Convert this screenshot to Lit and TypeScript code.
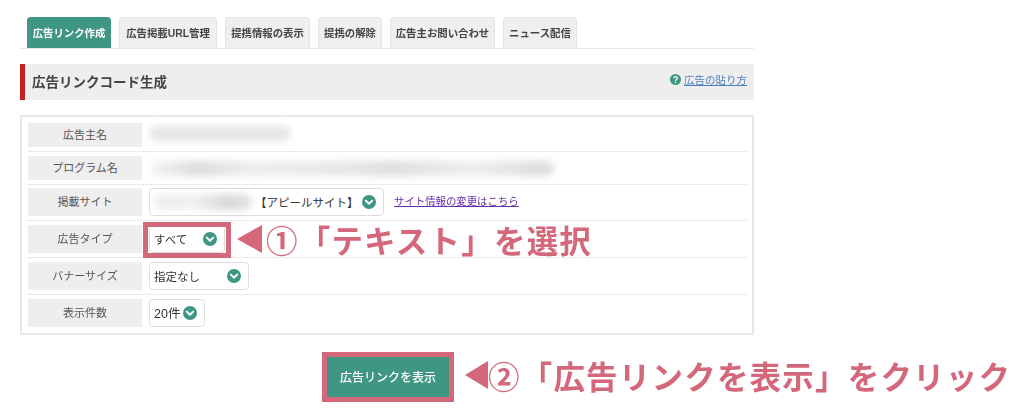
import { LitElement, html, css, svg } from "lit";
import { customElement } from "lit/decorators.js";

const chevron = svg`<svg class="chev" width="14" height="14" viewBox="0 0 14 14"><circle cx="7" cy="7" r="7" fill="#3f9683"/><path d="M3.8 5.6 7 8.7l3.2-3.1" fill="none" stroke="#fff" stroke-width="2" stroke-linecap="round" stroke-linejoin="round"/></svg>`;

@customElement("app-root")
export class AppRoot extends LitElement {
  static styles = css`
    :host { display: block; width: 1024px; height: 413px; position: relative; overflow: hidden; background: #fff;
      font-family: "Liberation Sans", "Noto Sans CJK JP", sans-serif; color: #444; }
    .page { padding: 17px 270px 0 20px; filter: blur(0.35px); }
    .tabs { display: flex; gap: 8px; padding-left: 7px; height: 32px; border-bottom: 1px solid #e6e6e6; box-sizing: border-box; }
    .tab { height: 31px; box-sizing: border-box; border: 1px solid #e3e3e3; border-bottom: 0; border-radius: 4px 4px 0 0; background: #efefef; padding-bottom: 1px;
      font-size: 10.4px; font-weight: 700; color: #444; display: flex; align-items: center; justify-content: center; white-space: nowrap; }
    .tab.on { background: #3f9683; border-color: #3f9683; color: #fff; }
    .heading { margin-top: 15px; height: 36px; box-sizing: border-box; background: #eee; border-left: 5px solid #c5221f; display: flex; align-items: center; justify-content: space-between; padding: 0 7px 2px 7px; }
    .heading h2 { margin: 0; font-size: 13.5px; font-weight: 700; color: #444; }
    .help { display: flex; align-items: center; gap: 3px; font-size: 10.5px; color: #4f7fc0; text-decoration: underline; margin-top: -4px; }
    .box { margin-top: 15px; border: 2px solid #e8e8e8; height: 220px; box-sizing: border-box; padding: 6px 4px 0 6px; }
    .row { display: flex; gap: 6px; border-bottom: 1px dotted #d8d8d8; padding-bottom: 4px; margin-bottom: 4px; position: relative; align-items: center; }
    .row:last-child { border-bottom: 0; margin-bottom: 0; }
    .row.snug { margin-bottom: 3px; }
    .label { width: 114px; flex: none; box-sizing: border-box; padding-bottom: 3px; background: #eee; display: flex; align-items: center; justify-content: center; font-size: 11px; color: #555; height: 24px; }
    .tall .label { height: 28px; }
    .select { height: 28px; box-sizing: border-box; border: 1px solid #ddd; border-radius: 4px; background: #fff; display: flex; align-items: center; font-size: 11.5px; color: #333; padding: 0 7px 1px 4px; margin-left: 1px; white-space: nowrap; }
    .select .txt { flex: 1; }
    .select .num { font-size: 12.5px; flex: 1; }
    .chev { flex: none; margin-top: 1px; }
    .blur { filter: blur(3.5px); background: #e6e6e6; border-radius: 8px; }
    .b1 { width: 142px; height: 15px; margin: 0 0 4px 1px; }
    .b2 { width: 404px; height: 15px; margin-left: 2px; background: linear-gradient(90deg, #f4f4f4, #dcdcdc 12%, #eee 25%, #e6e6e6 50%, #dedede 60%, #eee 80%, #ddd 96%); }
    .b3 { width: 98px; height: 16px; flex: none; background: linear-gradient(90deg, #eee, #f0f0f0 40%, #d8d8d8 75%, #e4e4e4); }
    .link { font-size: 10.4px; color: #6a2fb0; text-decoration: underline; margin-left: 4px; padding-bottom: 3px; }
    .r-out { position: absolute; left: 115px; top: -3px; width: 88px; height: 36px; box-sizing: border-box; border: 5px solid #d4677a; pointer-events: none; }
    .callout { position: absolute; display: flex; align-items: center; color: #d4677a; font-weight: 700; white-space: nowrap; font-size: 31.5px; letter-spacing: 1.2px; }
    .tri { flex: none; width: 0; height: 0; border-style: solid; border-color: transparent #d4677a transparent transparent; }
    .c1 { left: 209px; top: -5px; height: 38px; }
    .c1 .tri { border-width: 14px 25px 14px 0; margin-right: 4px; }
    .actions { padding: 17px 0 0 302px; position: relative; }
    .btn-wrap { position: relative; width: 132px; height: 50px; box-sizing: border-box; border: 5px solid #d4677a; display: flex; }
    .btn { flex: 1; background: #3f9683; color: #fff; font-size: 12px; font-weight: 500; display: flex; align-items: center; justify-content: center; padding-bottom: 2px; }
    .c2 { left: 445px; top: 15px; height: 50px; }
    .c2 .tri { border-width: 14px 23px 14px 0; }
  `;

  private tabs = [
    ["広告リンク作成", 84, true], ["広告掲載URL管理", 98, false], ["提携情報の表示", 85, false],
    ["提携の解除", 64, false], ["広告主お問い合わせ", 105, false], ["ニュース配信", 74, false],
  ] as const;

  render() {
    return html`
      <div class="page">
        <div class="tabs">
          ${this.tabs.map(([t, w, on]) => html`<div class="tab ${on ? "on" : ""}" style="width:${w}px">${t}</div>`)}
        </div>
        <div class="heading">
          <h2>広告リンクコード生成</h2>
          <span class="help">
            <svg width="11" height="11" viewBox="0 0 11 11"><circle cx="5.5" cy="5.5" r="5.5" fill="#3f9683"/><path d="M3.8 4.2a1.8 1.6 0 1 1 2.6 1.5c-.6.3-.9.6-.9 1.2" fill="none" stroke="#fff" stroke-width="1.3"/><circle cx="5.5" cy="8.5" r=".8" fill="#fff"/></svg>
            広告の貼り方
          </span>
        </div>
        <div class="box">
          <div class="row"><div class="label">広告主名</div><div class="blur b1"></div></div>
          <div class="row snug"><div class="label">プログラム名</div><div class="blur b2"></div></div>
          <div class="row tall">
            <div class="label">掲載サイト</div>
            <div class="select" style="width:235px"><span class="blur b3"></span><span class="txt" style="margin-left:3px">【アピールサイト】</span>${chevron}</div>
            <span class="link">サイト情報の変更はこちら</span>
          </div>
          <div class="row tall">
            <div class="label">広告タイプ</div>
            <div class="select" style="width:76px"><span class="txt">すべて</span>${chevron}</div>
            <div class="r-out"></div>
            <div class="callout c1"><span class="tri"></span>①「テキスト」を選択</div>
          </div>
          <div class="row tall">
            <div class="label">バナーサイズ</div>
            <div class="select" style="width:100px"><span class="txt">指定なし</span>${chevron}</div>
          </div>
          <div class="row tall">
            <div class="label">表示件数</div>
            <div class="select" style="width:56px"><span class="num">20件</span>${chevron}</div>
          </div>
        </div>
        <div class="actions">
          <div class="btn-wrap"><div class="btn">広告リンクを表示</div></div>
          <div class="callout c2"><span class="tri"></span>②「広告リンクを表示」をクリック</div>
        </div>
      </div>
    `;
  }
}
